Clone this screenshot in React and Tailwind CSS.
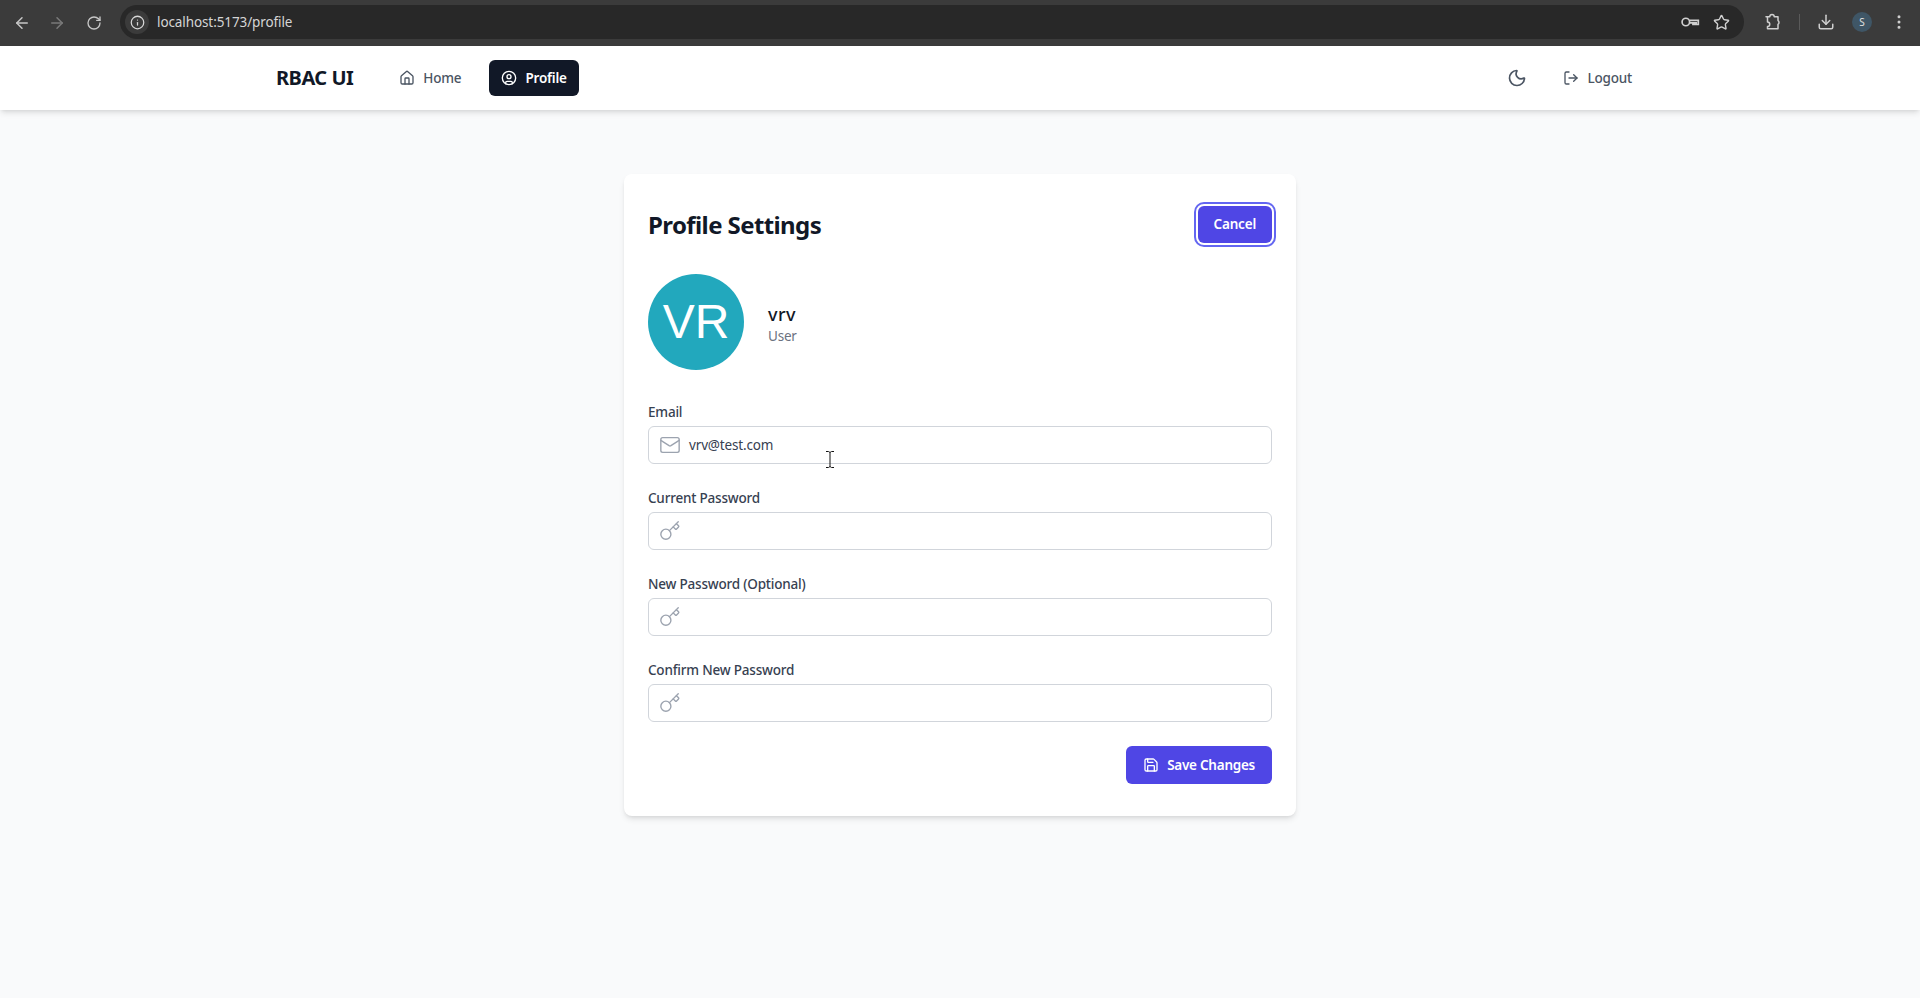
import React from 'react';
import {
  ArrowLeft,
  ArrowRight,
  RotateCw,
  Info,
  Star,
  Download,
  EllipsisVertical,
  House,
  CircleUser,
  Moon,
  LogOut,
  Mail,
  Key,
  Save,
} from 'lucide-react';

const fields = [
  { label: 'Email', icon: Mail, value: 'vrv@test.com' },
  { label: 'Current Password', icon: Key },
  { label: 'New Password (Optional)', icon: Key },
  { label: 'Confirm New Password', icon: Key },
];

const ChromeBar = () => (
  <div className="h-[46px] bg-[#3b3b3b] flex items-center pl-[13px] pr-[12px]">
    <div className="flex items-center text-[#c7c7c7]">
      <ArrowLeft size={18} />
      <ArrowRight size={18} className="ml-[17px] text-[#7a7a7a]" />
      <RotateCw size={16} className="ml-[20px]" />
    </div>
    <div className="ml-[18px] w-[1624px] h-[34px] -mt-[2px] rounded-full bg-[#282828] flex items-center pl-[5px] pr-[14px]">
      <span className="w-[24px] h-[24px] rounded-full bg-[#3b3b3b] flex items-center justify-center text-[#d8d8d8]">
        <Info size={15} />
      </span>
      <span className="ml-[8px] text-[13.5px] tracking-[-0.1px] text-[#d5d5d5]">localhost:5173/profile</span>
      <div className="ml-auto flex items-center gap-[13px] text-[#d0d0d0]">
        <svg width="20" height="20" viewBox="0 0 24 24" fill="none" stroke="currentColor" strokeWidth="2">
          <circle cx="7" cy="12" r="4.5" />
          <path d="M11.5 10h10.5v5h-2.5v-2h-2v2h-2v-2h-4" />
        </svg>
        <Star size={17} />
      </div>
    </div>
    <div className="ml-auto -mt-[2px] flex items-center text-[#cfcfcf]">
      <svg width="18" height="18" viewBox="0 0 24 24" fill="none" stroke="currentColor" strokeWidth="2" strokeLinejoin="round">
        <path d="M4 5h5a3 3 0 0 1 6 0h5v5a3 3 0 0 1 0 5v6H6v-3a3 3 0 0 0 0-6V5z" />
      </svg>
      <span className="ml-[18px] w-px h-[16px] bg-[#5a5a5a]" />
      <Download size={18} className="ml-[17px]" />
      <span className="ml-[17px] w-[20px] h-[20px] rounded-full bg-[#3f5666] text-[10px] flex items-center justify-center text-[#e0e0e0]">
        S
      </span>
      <EllipsisVertical size={18} className="ml-[18px]" />
    </div>
  </div>
);

const Navbar = () => (
  <nav className="h-[64px] bg-white shadow-md relative">
    <div className="w-[1400px] h-full mx-auto px-4 flex items-center justify-between">
      <div className="flex items-center">
        <span className="text-[20px] font-bold tracking-[-0.5px] text-[#111827]">RBAC UI</span>
        <div className="ml-[34px] flex items-center gap-[16px]">
          <a className="flex items-center gap-[8px] px-[12px] py-[8px] rounded-md text-[13.5px] tracking-[-0.2px] font-medium text-[#4b5563]">
            <House size={16} />
            Home
          </a>
          <a className="flex items-center gap-[8px] px-[12px] py-[8px] rounded-md text-[13.5px] tracking-[-0.2px] font-semibold text-white bg-[#111827]">
            <CircleUser size={16} />
            Profile
          </a>
        </div>
      </div>
      <div className="flex items-center gap-[16px]">
        <button className="p-[8px] text-[#4b5563]">
          <Moon size={20} />
        </button>
        <button className="flex items-center gap-[8px] px-[12px] py-[8px] text-[13.5px] tracking-[-0.2px] font-medium text-[#4b5563]">
          <LogOut size={16} />
          Logout
        </button>
      </div>
    </div>
  </nav>
);

const Field = ({ label, icon: Icon, value }) => (
  <div>
    <label className="block text-[13.5px] tracking-[-0.2px] leading-[20px] font-medium text-[#374151] mb-[4px]">{label}</label>
    <div className="h-[38px] border border-[#d1d5db] rounded-md flex items-center pl-[10px] bg-white">
      <Icon size={22} strokeWidth={1.5} className="text-[#9ca3af]" />
      <span className="ml-[8px] text-[13.5px] tracking-[-0.15px] text-[#374151]">{value}</span>
    </div>
  </div>
);

export default function App() {
  return (
    <div className="min-h-[998px] bg-[#f9fafb] font-['Noto_Sans',sans-serif] relative">
      <ChromeBar />
      <Navbar />
      <main className="py-[64px] flex justify-center">
        <div className="w-[672px] bg-white rounded-lg shadow-md px-[24px] pt-[24px] pb-[32px]">
          <div className="h-[52px] flex items-center justify-between">
            <h1 className="pt-[1px] text-[24px] font-bold tracking-[-0.6px] text-[#111827]">Profile Settings</h1>
            <button className="h-[37px] px-[16px] rounded-md bg-[#4f46e5] text-white text-[13.5px] tracking-[-0.2px] font-semibold ring-2 ring-[#6366f1] ring-offset-2">
              Cancel
            </button>
          </div>
          <div className="mt-[24px] flex items-center gap-[24px]">
            <div className="w-[96px] h-[96px] rounded-full bg-[#22a8bd] flex items-center justify-center text-white text-[48px] font-['Liberation_Sans',sans-serif]">
              VR
            </div>
            <div>
              <div className="-mt-[1px] text-[18px] tracking-[0.4px] leading-[28px] font-medium text-[#111827]">vrv</div>
              <div className="text-[13.5px] tracking-[-0.2px] leading-[16px] text-[#6b7280]">User</div>
            </div>
          </div>
          <div className="mt-[32px] flex flex-col gap-[24px]">
            {fields.map((f) => (
              <Field key={f.label} {...f} />
            ))}
          </div>
          <div className="mt-[24px] flex justify-end">
            <button className="h-[38px] px-[17px] rounded-md bg-[#4f46e5] text-white text-[13.5px] tracking-[-0.25px] font-semibold flex items-center gap-[8px]">
              <Save size={16} />
              Save Changes
            </button>
          </div>
        </div>
      </main>
      <svg className="absolute left-[825px] top-[451px]" width="10" height="17" viewBox="0 0 10 17" fill="none" stroke="#111" strokeWidth="1">
        <path d="M1 .5h2.5L5 1.5 6.5.5H9M5 1.5v14M1 16.5h2.5L5 15.5l1.5 1H9" />
      </svg>
    </div>
  );
}
